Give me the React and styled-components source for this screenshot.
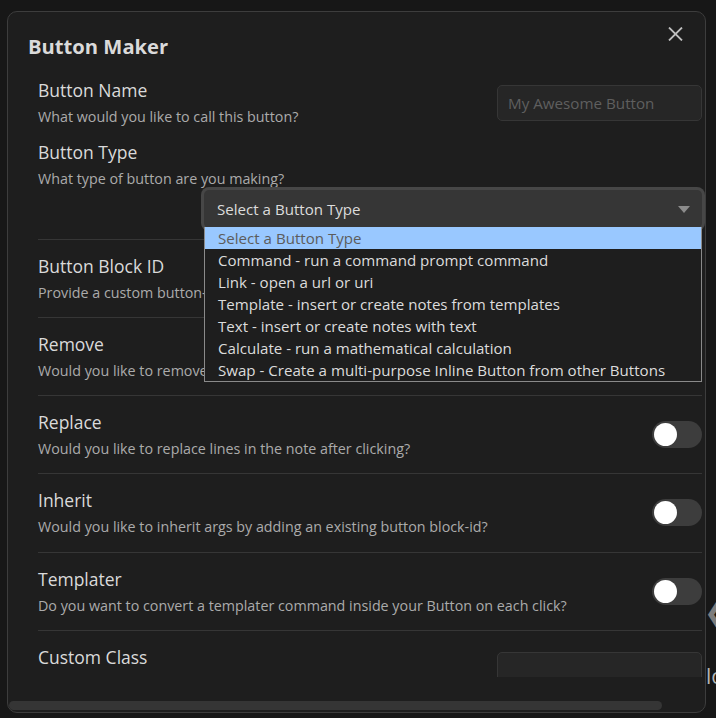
import React from "react";
import styled, { createGlobalStyle } from "styled-components";

const GlobalStyle = createGlobalStyle`
  html, body {
    margin: 0;
    background: #171717;
    font-family: "Open Sans", "Noto Sans", sans-serif;
    overflow: hidden;
  }
`;

const Page = styled.div`
  position: relative;
  width: 716px;
  height: 718px;
  overflow: hidden;
`;

const Behind = styled.div`
  position: absolute;
  left: ${(p) => p.x}px;
  top: ${(p) => p.y}px;
  color: ${(p) => p.color};
  font-size: ${(p) => p.size}px;
  font-weight: ${(p) => p.weight || 400};
  line-height: 1;
`;

const Modal = styled.div`
  position: relative;
  box-sizing: border-box;
  margin: 11px 0 0 7px;
  width: 699px;
  height: 702px;
  background: #1e1e1e;
  border: 1px solid #3d3d3d;
  border-radius: 10px;
  display: flex;
  flex-direction: column;
  overflow: hidden;
`;

const CloseButton = styled.div`
  position: absolute;
  top: 15px;
  right: 22px;
  width: 15px;
  height: 14px;
  display: flex;
`;

const Title = styled.h1`
  margin: 20px 0 4px 20px;
  font-size: 20.2px;
  line-height: 28px;
  font-weight: 700;
  color: #dadada;
`;

const Scroll = styled.div`
  height: 613px;
  overflow: hidden;
  padding: 0 3px 0 30px;
  flex-shrink: 0;
`;

const Setting = styled.div`
  display: flex;
  flex-direction: ${(p) => (p.stacked ? "column" : "row")};
  align-items: ${(p) => (p.stacked ? "stretch" : "center")};
  gap: 12px;
  padding: ${(p) => p.pad || "14px 0 14px"};
  border-top: ${(p) => (p.plain ? "none" : "1px solid #363636")};
`;

const Info = styled.div`
  flex: 1;
  min-width: 0;
`;

const Name = styled.div`
  font-size: 17.5px;
  line-height: 24px;
  color: #dadada;
`;

const Desc = styled.div`
  margin-top: 4px;
  font-size: 14.3px;
  line-height: 21px;
  color: #ababab;
  white-space: nowrap;
`;

const TextInput = styled.div`
  box-sizing: border-box;
  width: 205px;
  height: 36px;
  flex-shrink: 0;
  background: #262626;
  border: 1px solid #363636;
  border-radius: 5px;
  padding-left: 10px;
  font-size: 15.2px;
  line-height: 35px;
  color: #5f5f5f;
`;

const Toggle = styled.div`
  box-sizing: border-box;
  width: 50px;
  height: 27px;
  flex-shrink: 0;
  border-radius: 14px;
  background: #3d3d3d;
  padding: 2px;
  display: flex;
  &::after {
    content: "";
    width: 23px;
    height: 23px;
    border-radius: 50%;
    background: #ffffff;
  }
`;

const SelectWrap = styled.div`
  position: relative;
  align-self: flex-end;
  margin-top: -11px;
  width: 498px;
`;

const Select = styled.div`
  box-sizing: border-box;
  height: 38px;
  display: flex;
  align-items: center;
  justify-content: space-between;
  padding: 0 12px 0 13px;
  background: #363636;
  border-radius: 5px;
  box-shadow: 0 0 0 3px #474747;
  font-size: 15.1px;
  color: #dcdcdc;
`;

const Menu = styled.ul`
  position: absolute;
  top: calc(100% - 1px);
  left: 0;
  right: 0;
  margin: 0;
  padding: 0;
  list-style: none;
  background: #1e1e1e;
  border: 1px solid #8a8a8a;
  border-top: none;
  z-index: 2;
`;

const Option = styled.li`
  height: 22px;
  padding-left: 13px;
  font-size: 15.1px;
  line-height: 22px;
  white-space: nowrap;
  color: ${(p) => (p.active ? "#5c5c5c" : "#dcdcdc")};
  background: ${(p) => (p.active ? "#99c8ff" : "transparent")};
`;

const ScrollTrack = styled.div`
  margin: 24px 0 0 1px;
  width: 653px;
  height: 9px;
  border-radius: 5px;
  background: #353535;
  flex-shrink: 0;
`;

const options = [
  "Select a Button Type",
  "Command - run a command prompt command",
  "Link - open a url or uri",
  "Template - insert or create notes from templates",
  "Text - insert or create notes with text",
  "Calculate - run a mathematical calculation",
  "Swap - Create a multi-purpose Inline Button from other Buttons",
];

const toggles = [
  ["Remove", "Would you like to remove this button after clicking?", "14px 0 14px"],
  ["Replace", "Would you like to replace lines in the note after clicking?", "14px 0 14px"],
  ["Inherit", "Would you like to inherit args by adding an existing button block-id?", "14px 0 15px"],
  ["Templater", "Do you want to convert a templater command inside your Button on each click?", "14px 0 14px"],
];

export default function App() {
  return (
    <Page>
      <GlobalStyle />
      <Behind x={705} y={600} size={24} weight={700} color="#7d7d7d">
        ❮
      </Behind>
      <Behind x={706} y={666} size={21} color="#b5b5b5">
        lo
      </Behind>
      <Modal>
        <CloseButton>
          <svg width="15" height="14" viewBox="0 0 15 14">
            <path d="M1 0.5 L14 13.5 M14 0.5 L1 13.5" stroke="#bdbdbd" strokeWidth="1.8" />
          </svg>
        </CloseButton>
        <Title>Button Maker</Title>
        <Scroll>
          <Setting plain pad="14px 0 0">
            <Info>
              <Name>Button Name</Name>
              <Desc>What would you like to call this button?</Desc>
            </Info>
            <TextInput>My Awesome Button</TextInput>
          </Setting>
          <Setting plain stacked pad="13px 0 11px">
            <Info>
              <Name>Button Type</Name>
              <Desc>What type of button are you making?</Desc>
            </Info>
            <SelectWrap>
              <Select>
                <span>Select a Button Type</span>
                <svg width="12" height="7" viewBox="0 0 12 7">
                  <path d="M0 0 H12 L6 7 Z" fill="#8c8c8c" />
                </svg>
              </Select>
              <Menu>
                {options.map((o, i) => (
                  <Option key={o} active={i === 0}>
                    {o}
                  </Option>
                ))}
              </Menu>
            </SelectWrap>
          </Setting>
          <Setting>
            <Info>
              <Name>Button Block ID</Name>
              <Desc>Provide a custom button-id that you can use in inline buttons</Desc>
            </Info>
            <TextInput />
          </Setting>
          {toggles.map(([n, d, pad]) => (
            <Setting key={n} pad={pad}>
              <Info>
                <Name>{n}</Name>
                <Desc>{d}</Desc>
              </Info>
              <Toggle />
            </Setting>
          ))}
          <Setting>
            <Info>
              <Name>Custom Class</Name>
              <Desc>Add a custom class to style your button</Desc>
            </Info>
            <TextInput />
          </Setting>
        </Scroll>
        <ScrollTrack />
      </Modal>
    </Page>
  );
}
